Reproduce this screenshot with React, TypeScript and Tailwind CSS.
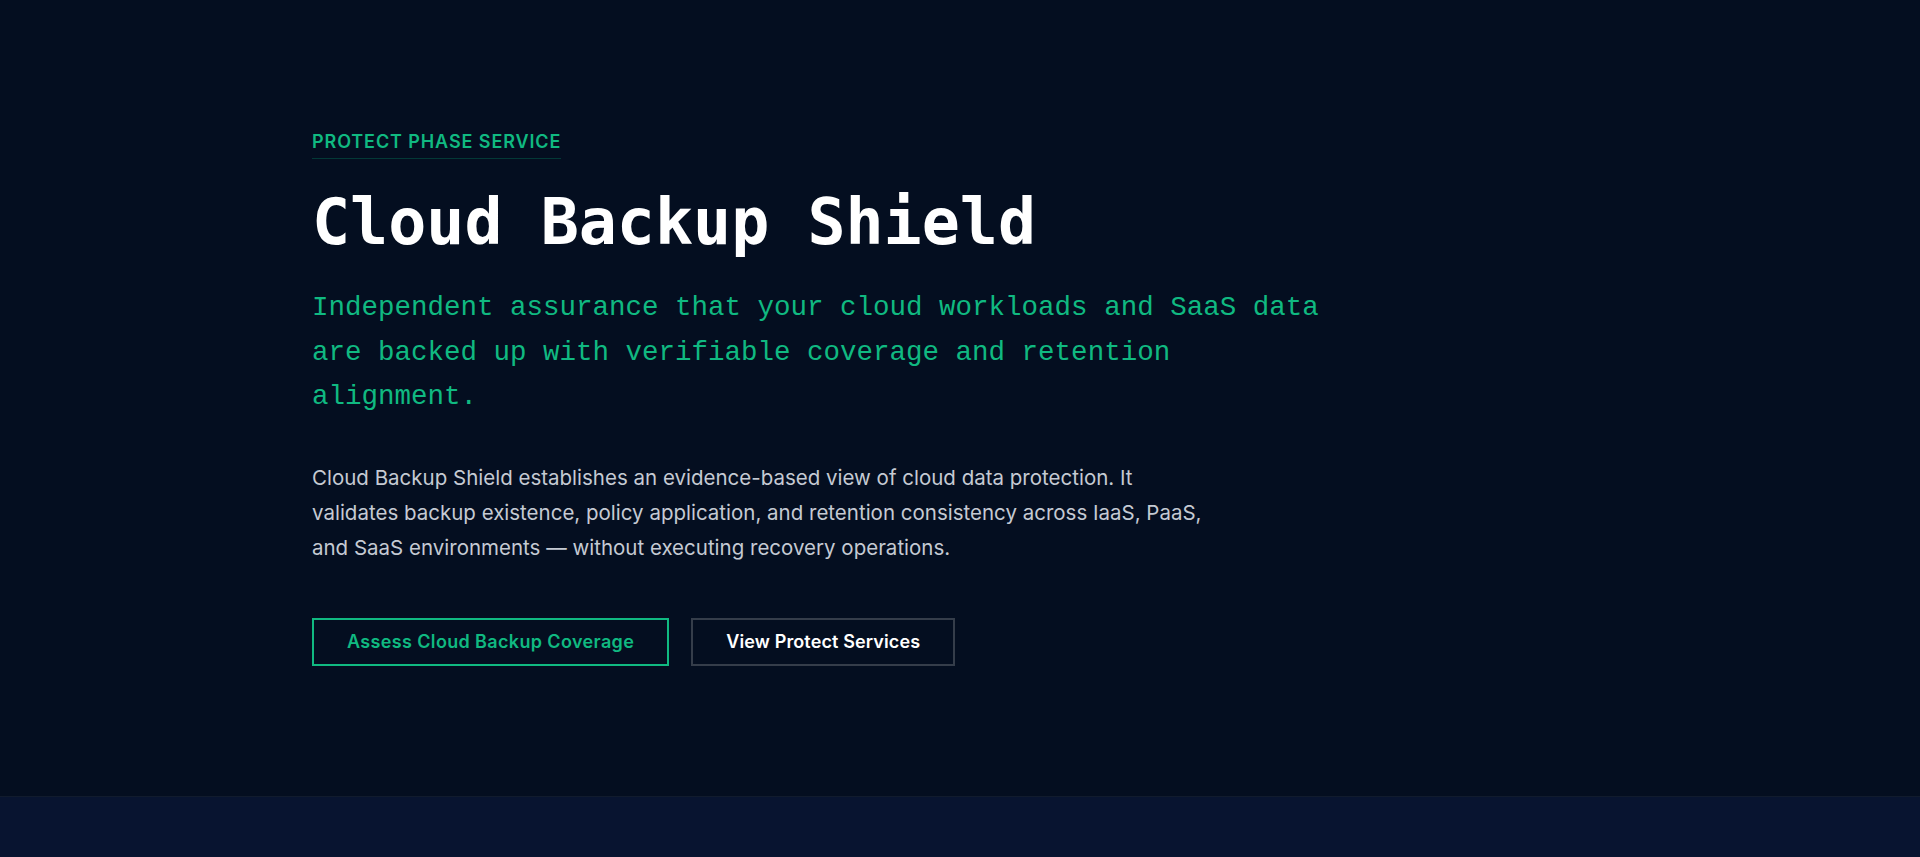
import React from "react";

export default function App() {
  return (
    <div className="min-h-screen w-full bg-[#081430] font-['Inter','Noto_Sans',sans-serif]">
      {/* Hero */}
      <section className="bg-[#040e20] border-b border-[#111b2d] pt-[130px] pb-[130px]">
        <div className="max-w-[1296px] mx-auto">
          <span className="inline-block text-[18px] leading-6 font-semibold uppercase tracking-wider text-[#10b981] pb-1 border-b border-emerald-500/25">
            Protect Phase Service
          </span>

          <h1 className="mt-8 text-[63.3px] leading-none font-bold text-white font-['DejaVu_Sans_Mono',monospace]">
            Cloud Backup Shield
          </h1>

          <p className="mt-8 max-w-5xl text-[27.5px] leading-[44.5px] text-[#10b981] font-['Liberation_Mono',monospace]">
            Independent assurance that your cloud workloads and SaaS data are backed up with verifiable coverage and retention alignment.
          </p>

          <p className="mt-10 max-w-4xl text-[20.5px] leading-[35px] text-[#c5cad3]">
            Cloud Backup Shield establishes an evidence-based view of cloud data protection. It validates backup existence, policy application, and retention consistency across IaaS, PaaS, and SaaS environments — without executing recovery operations.
          </p>

          <div className="mt-[53px] flex items-center gap-[22px]">
            <a
              href="#assess"
              className="inline-flex items-center border-2 border-[#10b981] px-[33px] py-3 text-[18px] leading-5 tracking-[0.02em] font-semibold text-[#10b981]"
            >
              Assess Cloud Backup Coverage
            </a>
            <a
              href="#protect"
              className="inline-flex items-center border-2 border-[#353d4a] px-[33px] py-3 text-[18px] leading-5 tracking-[0.007em] font-semibold text-white"
            >
              View Protect Services
            </a>
          </div>
        </div>
      </section>

      {/* Next section */}
      <section className="h-[200px] bg-[#081430]" />
    </div>
  );
}
